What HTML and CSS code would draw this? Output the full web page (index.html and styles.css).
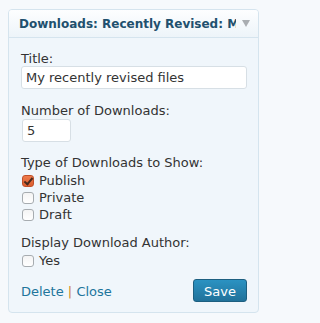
FILE: index.html
```html
<!DOCTYPE html>
<html>
<head>
<meta charset="utf-8">
<link rel="stylesheet" href="styles.css">
</head>
<body>
<div class="widget">
  <div class="widget-top">
    <h4 class="widget-title">Downloads: Recently Revised: My recently revised files</h4>
    <span class="toggle"></span>
  </div>
  <div class="widget-inside">
    <div class="field field-title">
      <label class="lbl" for="t">Title:</label>
      <input id="t" class="txt wide" type="text" value="My recently revised files">
    </div>
    <div class="field">
      <label class="lbl" for="n">Number of Downloads:</label>
      <input id="n" class="txt small" type="text" value="5">
    </div>
    <div class="field field-types">
      <div class="lbl">Type of Downloads to Show:</div>
      <div class="checks">
        <label class="check"><input type="checkbox" checked> Publish</label>
        <label class="check"><input type="checkbox"> Private</label>
        <label class="check"><input type="checkbox"> Draft</label>
      </div>
    </div>
    <div class="field">
      <div class="lbl">Display Download Author:</div>
      <div class="checks">
        <label class="check"><input type="checkbox"> Yes</label>
      </div>
    </div>
    <div class="actions">
      <div class="links"><a href="#">Delete</a> <span class="sep">|</span> <a href="#">Close</a></div>
      <button class="save" type="button">Save</button>
    </div>
  </div>
</div>
</body>
</html>
```

FILE: styles.css
```css
html, body {
  margin: 0;
  padding: 0;
  background: #f6f9fc;
  font-family: "DejaVu Sans", sans-serif;
  font-size: 13px;
  color: #333;
}
body {
  padding: 9px 8px 0 8px;
}
.widget {
  width: 251px;
  box-sizing: border-box;
  border: 1px solid #d5e4ee;
  border-radius: 4px;
  background: #f0f6fb;
  overflow: hidden;
}
.widget-top {
  display: flex;
  align-items: center;
  height: 27px;
  box-sizing: border-box;
  padding: 1px 8px 0 10px;
  background: linear-gradient(#fdfeff, #edf4f9);
  border-bottom: 1px solid #d5e4ee;
  height: 28px;
}
.widget-title {
  flex: 1;
  margin: 0;
  min-width: 0;
  overflow: hidden;
  white-space: nowrap;
  font-size: 12px;
  font-weight: bold;
  line-height: 26px;
  color: #21506e;
}
.toggle {
  width: 0;
  height: 0;
  margin-left: 6px;
  margin-top: -1px;
  border-left: 4px solid transparent;
  border-right: 4px solid transparent;
  border-top: 7px solid #a9adb1;
}
.widget-inside {
  padding: 13px 11px 10px 12px;
}
.field {
  margin-bottom: 13px;
}
.field-title {
  margin-bottom: 14px;
}
.field-types {
  margin-bottom: 12px;
}
.lbl {
  display: block;
  line-height: 15px;
}
.txt {
  box-sizing: border-box;
  height: 23px;
  margin: 0;
  padding: 0 4px;
  border: 1px solid #d7dfe5;
  border-radius: 3px;
  background: #fff;
  font-family: "DejaVu Sans", sans-serif;
  font-size: 13px;
  color: #333;
  display: block;
}
.wide {
  width: 226px;
}
.small {
  width: 49px;
  margin-top: 1px;
  margin-left: 1px;
}
.checks {
  margin-top: 2px;
}
.check {
  display: flex;
  align-items: center;
  line-height: 17px;
  height: 17px;
}
.check input {
  appearance: none;
  -webkit-appearance: none;
  box-sizing: border-box;
  width: 12px;
  height: 12px;
  margin: 0 5px 0 1px;
  border: 1px solid #a7acb0;
  border-radius: 3px;
  background: linear-gradient(#f4f4f4, #ffffff);
  position: relative;
}
.check input:checked {
  background: linear-gradient(#ee7b4c, #dd5e2e);
  border-color: #c0502a;
}
.check input:checked::after {
  content: "";
  position: absolute;
  left: 3px;
  top: 0px;
  width: 3px;
  height: 7px;
  border-right: 2px solid #4a2a1e;
  border-bottom: 2px solid #4a2a1e;
  transform: rotate(40deg);
}
.actions {
  display: flex;
  justify-content: space-between;
  align-items: baseline;
  margin-top: -3px;
}
.links a {
  color: #21759b;
  text-decoration: none;
}
.sep {
  color: #d08a2a;
}
.save {
  box-sizing: border-box;
  height: 23px;
  padding: 3px 10px 0;
  line-height: 18px;
  border: 1px solid #1d5f80;
  border-radius: 3px;
  background: linear-gradient(#2b92c2, #21729a);
  color: #fff;
  font-family: "DejaVu Sans", sans-serif;
  font-size: 13px;
}
```
